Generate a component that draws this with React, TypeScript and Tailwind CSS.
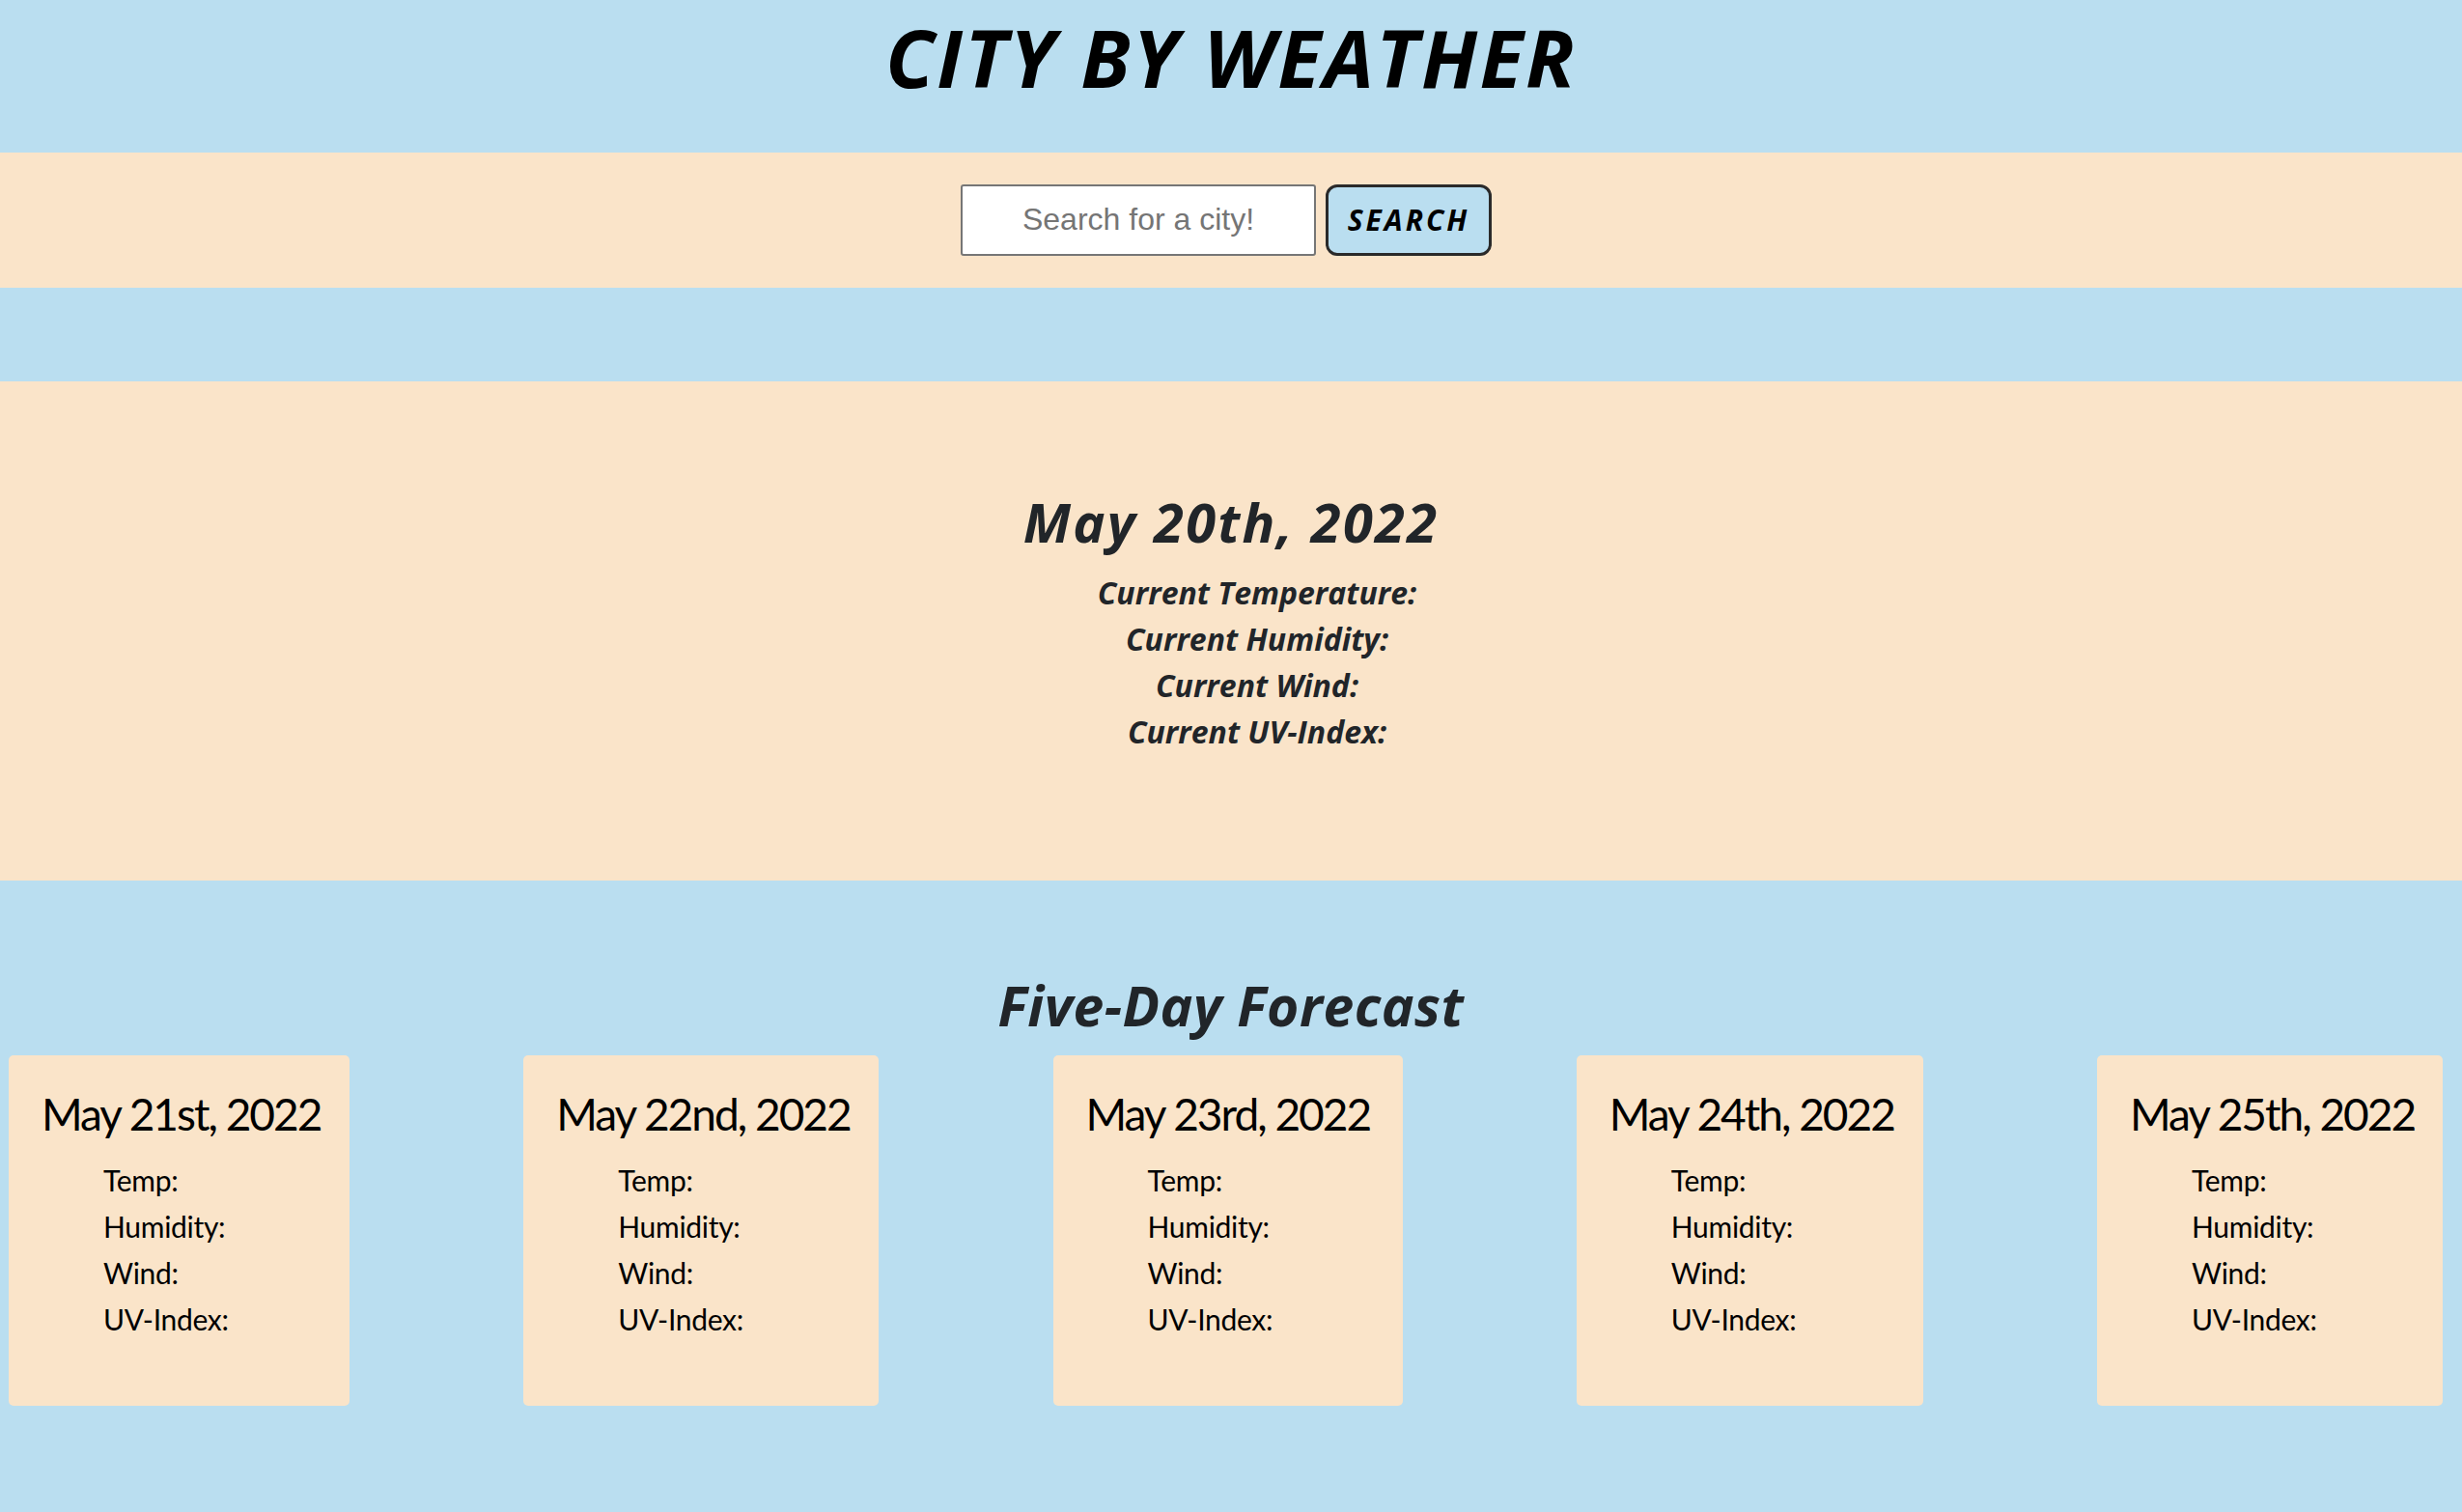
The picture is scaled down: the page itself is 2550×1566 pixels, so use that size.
import React from "react";

const cards = [
  { date: "May 21st, 2022", w: "w-[353px]" },
  { date: "May 22nd, 2022", w: "w-[368px]" },
  { date: "May 23rd, 2022", w: "w-[362px]" },
  { date: "May 24th, 2022", w: "w-[359px]" },
  { date: "May 25th, 2022", w: "w-[358px]" },
];

export default function App() {
  const head = { fontFamily: "'Open Sans', Lato, sans-serif" };
  const body = { fontFamily: "Lato, 'Noto Sans', sans-serif" };
  return (
    <div className="min-h-[1566px] w-full bg-[#badef0]">
      <header className="flex justify-center pt-[9px] pb-[49px]">
        <h1
          style={head}
          className="text-[83px] leading-[1.2] font-bold italic text-black tracking-[2.5px]"
        >
          CITY BY WEATHER
        </h1>
      </header>

      <section className="flex h-[140px] items-center justify-center gap-[10px] bg-[#fae4c9] pr-[10px]">
        <input
          type="text"
          placeholder="Search for a city!"
          style={{ fontFamily: "'Liberation Sans', Arial, sans-serif" }}
          className="h-[74px] w-[368px] rounded-[3px] border-2 border-[#767676] bg-white text-center text-[32px] text-black placeholder:text-[#757575] outline-none"
        />
        <button
          style={head}
          className="h-[74px] w-[172px] rounded-[12px] border-[3px] border-[#2a2a2a] bg-[#badef0] text-[30px] font-bold italic tracking-[3px] text-black"
        >
          SEARCH
        </button>
      </section>

      <div className="h-[97px]" />

      <section
        style={head}
        className="flex h-[517px] flex-col items-center bg-[#fae4c9] pt-[112px] text-[#212529]"
      >
        <h2 className="text-[56px] leading-[1.2] font-bold italic tracking-[2.3px]">May 20th, 2022</h2>
        <div className="mt-[16px] flex flex-col items-center pl-[54px] text-[32px] leading-[48px] font-bold italic">
          <p>Current Temperature:</p>
          <p>Current Humidity:</p>
          <p>Current Wind:</p>
          <p>Current UV-Index:</p>
        </div>
      </section>

      <section className="pt-[95px]">
        <h2
          style={head}
          className="text-center text-[57px] leading-[1.2] font-bold italic tracking-[0.5px] text-[#212529]"
        >
          Five-Day Forecast
        </h2>
        <div className="mt-[18px] flex justify-between pl-[9px] pr-[20px]">
          {cards.map((c) => (
            <div
              key={c.date}
              style={body}
              className={`${c.w} h-[363px] rounded-[5px] bg-[#fae4c9] px-[34px] pt-[32px] text-black`}
            >
              <h3 className="whitespace-nowrap text-[46px] leading-[1.25] tracking-[-2px]">{c.date}</h3>
              <ul className="mt-[16px] pl-[64px] text-[30px] leading-[48px] tracking-[-0.3px]">
                <li>Temp:</li>
                <li>Humidity:</li>
                <li>Wind:</li>
                <li>UV-Index:</li>
              </ul>
            </div>
          ))}
        </div>
      </section>
    </div>
  );
}
